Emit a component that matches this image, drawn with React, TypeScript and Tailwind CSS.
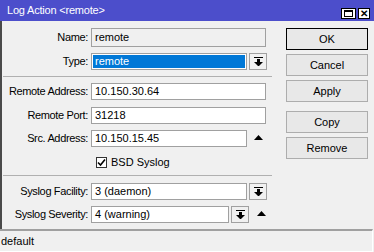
import React from "react";

const font = { fontFamily: '"Liberation Sans", Arial, sans-serif' };

function DropIcon() {
  return (
    <svg width="9" height="9" viewBox="0 0 9 9">
      <rect x="0" y="0" width="9" height="1" fill="#000" />
      <rect x="3" y="2" width="3" height="3" fill="#000" />
      <polygon points="0,5 9,5 4.5,9.5" fill="#000" />
    </svg>
  );
}

function UpTriangle() {
  return (
    <svg width="9" height="5" viewBox="0 0 9 5">
      <polygon points="0,5 9,5 4.5,0" fill="#000" />
    </svg>
  );
}

function DropButton() {
  return (
    <div className="w-[18px] h-full ml-[2px] border border-[#a0a0a0] bg-[#f0f0f0] flex items-center justify-center">
      <DropIcon />
    </div>
  );
}

function Label({ children }: { children: React.ReactNode }) {
  return <div className="w-[89px] pr-[3px] text-right shrink-0 tracking-[-0.35px]">{children}</div>;
}

function Field({ value, className = "" }: { value: string; className?: string }) {
  return (
    <div className={`h-full border border-[#a0a0a0] bg-white pl-[3px] flex items-center ${className}`}>
      {value}
    </div>
  );
}

function Btn({ children, primary = false, className = "" }: { children: React.ReactNode; primary?: boolean; className?: string }) {
  return (
    <div
      className={`h-[22px] flex items-center justify-center bg-[#e8e8e8] border ${
        primary ? "border-black" : "border-[#adadad]"
      } ${className}`}
    >
      {children}
    </div>
  );
}

export default function App() {
  return (
    <div className="w-[374px] h-[252px] bg-[#f0f0f0] flex flex-col text-[11px] text-black overflow-hidden" style={font}>
      {/* title bar */}
      <div className="h-[21px] bg-[#4c4ecb] flex items-center pl-[7px] pr-[4px] text-white text-[11px] shrink-0">
        <span className="flex-1 tracking-[-0.2px]">Log Action &lt;remote&gt;</span>
        <div className="flex gap-[2px] mt-[6px]">
          <div className="w-[15px] h-[11px] bg-white border border-black flex items-center justify-center">
            <div className="w-[9px] h-[7px] border border-black border-t-2" />
          </div>
          <div className="w-[12px] h-[11px] bg-white border border-black flex items-center justify-center text-[10px] font-bold leading-none text-black">
            ✕
          </div>
        </div>
      </div>

      {/* body */}
      <div className="flex-1 flex border-l-2 border-[#4a4a4a]">
        <div className="w-[270px] flex flex-col">
          <div className="mt-[7px] h-[19px] flex items-center">
            <Label>Name:</Label>
            <div className="w-[175px] h-full border border-[#a0a0a0] bg-[#f0f0f0] pl-[3px] flex items-center">remote</div>
          </div>
          <div className="mt-[6px] h-[17px] flex items-center">
            <Label>Type:</Label>
            <div className="w-[156px] h-full border border-[#a0a0a0] bg-white p-px">
              <div className="h-full bg-[#0078d7] text-white pl-[2px] flex items-center">remote</div>
            </div>
            <DropButton />
          </div>
          <div className="mt-[6px] ml-[1px] h-px bg-[#b0b0b0]" />
          <div className="mt-[6px] h-[17px] flex items-center">
            <Label>Remote Address:</Label>
            <Field value="10.150.30.64" className="w-[175px]" />
          </div>
          <div className="mt-[7px] h-[17px] flex items-center">
            <Label>Remote Port:</Label>
            <Field value="31218" className="w-[175px]" />
          </div>
          <div className="mt-[6px] h-[17px] flex items-center">
            <Label>Src. Address:</Label>
            <Field value="10.150.15.45" className="w-[156px]" />
            <div className="ml-[7px] mb-[2px]">
              <UpTriangle />
            </div>
          </div>
          <div className="mt-[9px] h-[13px] flex items-center pl-[94px]">
            <div className="w-[11px] h-[11px] border border-[#333] bg-white flex items-center justify-center">
              <svg width="9" height="9" viewBox="0 0 9 9">
                <polyline points="1,4.5 3.5,7 8,1.5" fill="none" stroke="#000" strokeWidth="1.6" />
              </svg>
            </div>
            <span className="ml-[4px]">BSD Syslog</span>
          </div>
          <div className="mt-[6px] ml-[1px] h-px bg-[#b0b0b0]" />
          <div className="mt-[7px] h-[17px] flex items-center">
            <Label>Syslog Facility:</Label>
            <Field value="3 (daemon)" className="w-[156px]" />
            <DropButton />
          </div>
          <div className="mt-[6px] h-[17px] flex items-center">
            <Label>Syslog Severity:</Label>
            <Field value="4 (warning)" className="w-[138px]" />
            <DropButton />
            <div className="ml-[8px] mb-[2px]">
              <UpTriangle />
            </div>
          </div>
        </div>

        <div className="ml-[14px] w-[82px] flex flex-col pt-[7px]">
          <Btn primary>OK</Btn>
          <Btn className="mt-[4px]">Cancel</Btn>
          <Btn className="mt-[4px]">Apply</Btn>
          <Btn className="mt-[9px]">Copy</Btn>
          <Btn className="mt-[4px]">Remove</Btn>
        </div>
      </div>

      {/* status bar */}
      <div className="h-[23px] shrink-0 border-t-2 border-[#a0a0a0] border-r border-r-white border-b border-b-white flex items-center pl-[1px] mr-[1px]">
        default
      </div>
    </div>
  );
}
